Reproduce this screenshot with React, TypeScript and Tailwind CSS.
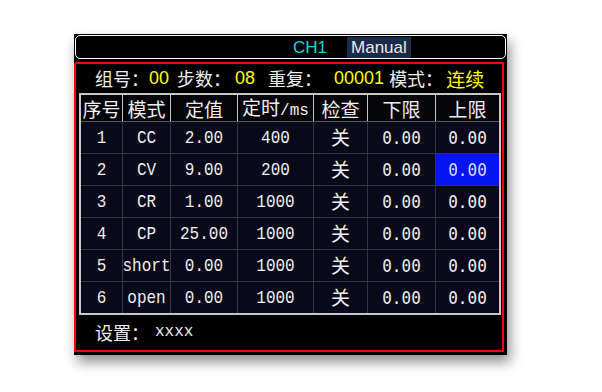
const cjk = { fontFamily: '"Noto Sans CJK SC", sans-serif' };
const serifMono = { fontFamily: '"Liberation Mono", "Noto Sans CJK SC", monospace' };
const sansMono = { fontFamily: '"DejaVu Sans Mono", "Noto Sans CJK SC", monospace' };
const arial = { fontFamily: '"Liberation Sans", sans-serif' };

const cols = "grid grid-cols-[41px_47px_66px_75px_53px_67px_63px] gap-px";

const headers = ["序号", "模式", "定值", "定时/ms", "检查", "下限", "上限"];

const rows = [
  ["1", "CC", "2.00", "400", "关", "0.00", "0.00"],
  ["2", "CV", "9.00", "200", "关", "0.00", "0.00"],
  ["3", "CR", "1.00", "1000", "关", "0.00", "0.00"],
  ["4", "CP", "25.00", "1000", "关", "0.00", "0.00"],
  ["5", "short", "0.00", "1000", "关", "0.00", "0.00"],
  ["6", "open", "0.00", "1000", "关", "0.00", "0.00"],
];

function Cell({ value, col, selected }: { value: string; col: number; selected: boolean }) {
  const font = col === 4 ? cjk : col >= 5 ? sansMono : serifMono;
  return (
    <div
      className={`h-[31px] flex items-center justify-center ${col === 4 ? "text-[19px]" : "text-[16px]"} ${
        selected ? "bg-[#0414f2] text-[#cfdcff]" : "bg-[#08091a] text-[#eeeeee]"
      }`}
      style={font}
    >
      <span className={col === 4 ? "" : "inline-block scale-y-[1.15]"}>{value}</span>
    </div>
  );
}

export default function App() {
  return (
    <div className="w-[602px] h-[392px] bg-white pl-[74px] pt-[34px]">
      <div className="w-[433px] h-[321px] bg-black flex flex-col shadow-[3px_7px_12px_rgba(0,0,0,0.45)]">
        {/* title bar */}
        <div className="mx-[1px] mt-[1px] h-[24px] border-[1.5px] border-white rounded-[5px] flex items-center pl-[217px] text-[17px] leading-none" style={arial}>
          <span className="text-[#10d8d8]">CH1</span>
          <span className="ml-[20px] bg-[#1b2a48] text-[#e8e8e8] px-[4px] py-[2px]">Manual</span>
        </div>

        <div className="mt-[3px] mr-[3px] mb-[3px] flex-1 border-2 border-[#ff0000] rounded-tl-[3px] flex flex-col">
          {/* status line */}
          <div className="h-[28px] flex items-center text-[18px] text-[#eeeeee] leading-none" style={cjk}>
            <span className="ml-[19px]">组号：</span>
            <span className="text-[#ffff00]" style={arial}>00</span>
            <span className="ml-[8px]">步数：</span>
            <span className="ml-[4px] text-[#ffff00]" style={arial}>08</span>
            <span className="ml-[13px]">重复：</span>
            <span className="ml-[12px] text-[#ffff00]" style={arial}>00001</span>
            <span className="ml-[5px]">模式：</span>
            <span className="ml-[3px] text-[#ffff00] text-[19px]">连续</span>
          </div>

          {/* table */}
          <div className="ml-[3px] mt-[1px] w-[422px] border-2 border-[#c8c8c8]">
            <div className={`${cols} bg-[#c4c4c4] border-b border-[#5a5a5a]`}>
              {headers.map((h) => (
                <div key={h} className="h-[26px] bg-[#050509] flex items-center justify-center text-[19px] text-[#eeeeee] leading-none whitespace-nowrap" style={cjk}>
                  {h === "定时/ms" ? (
                    <span>
                      定时<span className="text-[16px]" style={serifMono}>/ms</span>
                    </span>
                  ) : (
                    h
                  )}
                </div>
              ))}
            </div>
            <div className={`${cols} bg-[#363636]`}>
              {rows.map((r, i) =>
                r.map((v, j) => <Cell key={`${i}-${j}`} value={v} col={j} selected={i === 1 && j === 6} />)
              )}
            </div>
          </div>

          {/* footer */}
          <div className="flex-1 flex items-center pl-[19px] pb-[2px] text-[18px] text-[#eeeeee] leading-none">
            <span style={cjk}>设置：</span>
            <span className="ml-[6px] text-[16px]" style={serifMono}>xxxx</span>
          </div>
        </div>
      </div>
    </div>
  );
}
